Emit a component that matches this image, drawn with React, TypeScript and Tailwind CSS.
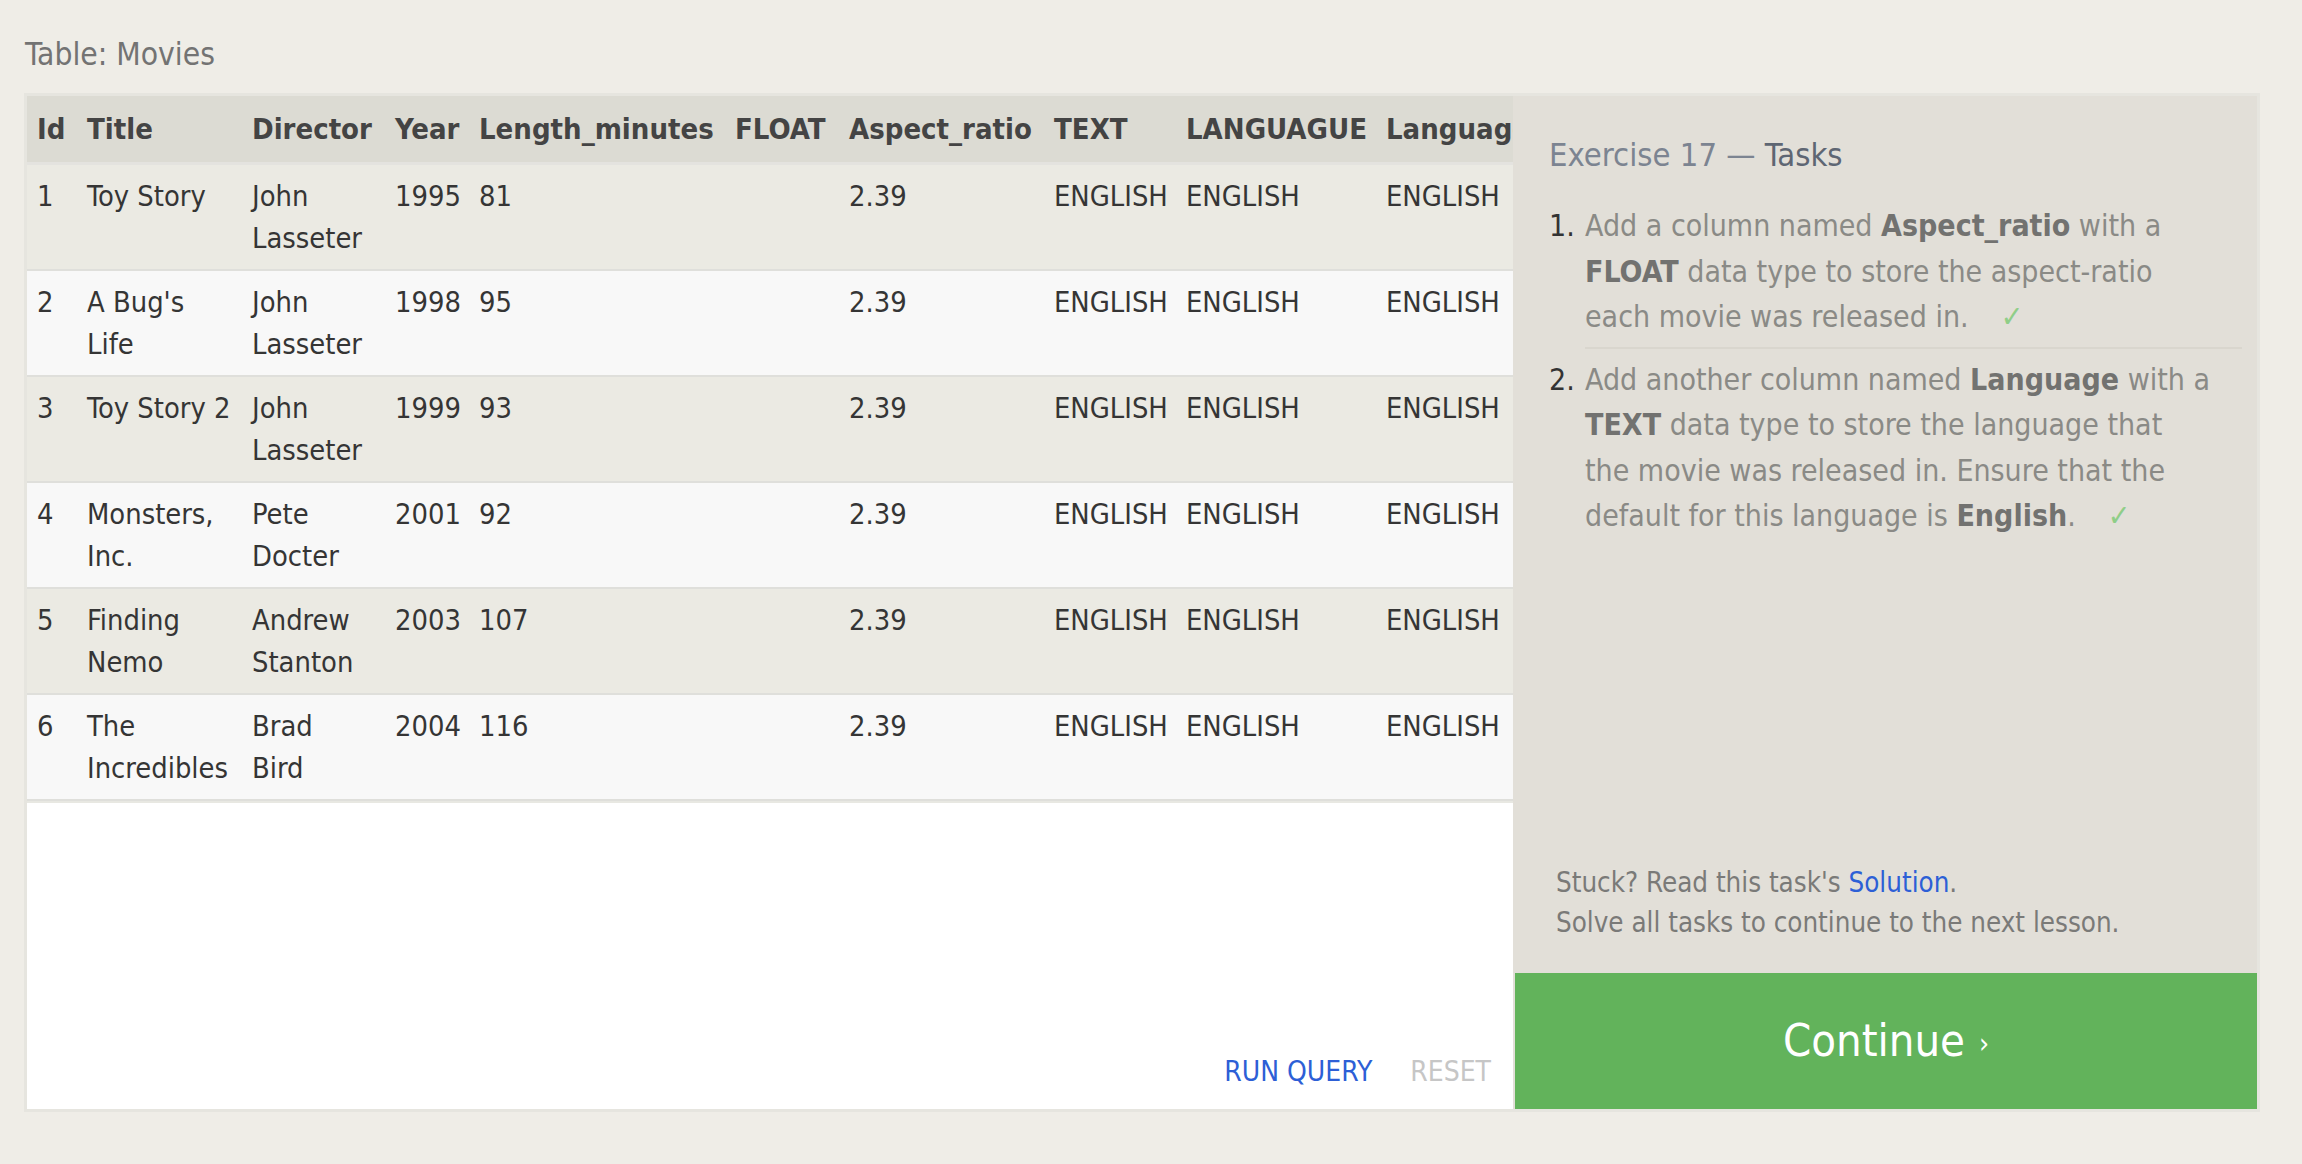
import React from "react";

const FONT = {
  fontFamily: "'DejaVu Sans Condensed', 'DejaVu Sans', sans-serif",
};

const cols = "grid grid-cols-[50px_165px_143px_84px_256px_114px_205px_132px_200px_200px] w-max";

const headers = [
  "Id",
  "Title",
  "Director",
  "Year",
  "Length_minutes",
  "FLOAT",
  "Aspect_ratio",
  "TEXT",
  "LANGUAGUE",
  "Language",
];

const rows: string[][][] = [
  [["1"], ["Toy Story"], ["John", "Lasseter"], ["1995"], ["81"], [""], ["2.39"], ["ENGLISH"], ["ENGLISH"], ["ENGLISH"]],
  [["2"], ["A Bug's", "Life"], ["John", "Lasseter"], ["1998"], ["95"], [""], ["2.39"], ["ENGLISH"], ["ENGLISH"], ["ENGLISH"]],
  [["3"], ["Toy Story 2"], ["John", "Lasseter"], ["1999"], ["93"], [""], ["2.39"], ["ENGLISH"], ["ENGLISH"], ["ENGLISH"]],
  [["4"], ["Monsters,", "Inc."], ["Pete", "Docter"], ["2001"], ["92"], [""], ["2.39"], ["ENGLISH"], ["ENGLISH"], ["ENGLISH"]],
  [["5"], ["Finding", "Nemo"], ["Andrew", "Stanton"], ["2003"], ["107"], [""], ["2.39"], ["ENGLISH"], ["ENGLISH"], ["ENGLISH"]],
  [["6"], ["The", "Incredibles"], ["Brad", "Bird"], ["2004"], ["116"], [""], ["2.39"], ["ENGLISH"], ["ENGLISH"], ["ENGLISH"]],
];

function B({ children }: { children: React.ReactNode }) {
  return <b className="text-[#727270]">{children}</b>;
}

function Check() {
  return <span className="ml-[32px] text-[#8fce88]">✓</span>;
}

export default function App() {
  return (
    <div
      className="min-h-[1164px] w-full bg-[#efede7] font-stretch-semi-condensed"
      style={FONT}
    >
      <div className="pl-[24px] pr-[42px] pt-[34px]">
        <div className="text-[31.5px] leading-[40px] text-[#737373] pl-px">Table: Movies</div>

        <div className="mt-[19px] flex h-[1019px] border-[3px] border-[#e6e5df]">
          {/* Left: table + editor */}
          <div className="flex w-[1486px] flex-col overflow-hidden">
            <div className="overflow-hidden">
              <div className={`${cols} bg-[#dcdbd3] border-b-[3px] border-[#e4e3df] py-[12px] text-[29px] font-bold leading-[42px] text-[#444444]`}>
                {headers.map((h) => (
                  <div key={h} className="pl-[10px] whitespace-nowrap">
                    {h}
                  </div>
                ))}
              </div>
              {rows.map((r, i) => (
                <div
                  key={i}
                  className={`${cols} border-b-2 border-[#dfdfdb] py-[10px] text-[28.8px] leading-[42px] text-[#353535] ${
                    i % 2 === 0 ? "bg-[#ebeae3]" : "bg-[#f8f8f8]"
                  }`}
                >
                  {r.map((cell, j) => (
                    <div key={j} className="pl-[10px]">
                      {cell.map((line, k) => (
                        <div key={k} className="whitespace-nowrap">
                          {line || "\u00a0"}
                        </div>
                      ))}
                    </div>
                  ))}
                </div>
              ))}
            </div>
            <div className="h-[2px] bg-[#e8e8e2]" />
            <div className="flex flex-1 items-end justify-end gap-[38px] bg-white pb-[16px] pr-[22px] text-[28px] leading-[42px]">
              <span className="text-[#2d5fd6]">RUN QUERY</span>
              <span className="text-[#c6c6c6]">RESET</span>
            </div>
          </div>

          {/* Right: tasks panel */}
          <div className="flex flex-1 flex-col bg-[#e2dfd8]">
            <div className="flex-1 pl-[36px] pr-[15px] pt-[38px]">
              <div className="text-[32.5px] leading-[42px]">
                <span className="text-[#7c8491]">Exercise 17 — </span>
                <span className="text-[#5e6673]">Tasks</span>
              </div>
              <ol className="mt-[27px] text-[30px] leading-[45.5px] text-[#8a8a86] whitespace-nowrap">
                <li className="grid grid-cols-[36px_1fr] pb-[8px]">
                  <span className="text-[#333333]">1.</span>
                  <span className="border-b-2 border-[#d9d6ce] pb-[7px]">
                    Add a column named <B>Aspect_ratio</B> with a
                    <br />
                    <B>FLOAT</B> data type to store the aspect-ratio
                    <br />
                    each movie was released in.
                    <Check />
                  </span>
                </li>
                <li className="grid grid-cols-[36px_1fr]">
                  <span className="text-[#333333]">2.</span>
                  <span>
                    Add another column named <B>Language</B> with a
                    <br />
                    <B>TEXT</B> data type to store the language that
                    <br />
                    the movie was released in. Ensure that the
                    <br />
                    default for this language is <B>English</B>.
                    <Check />
                  </span>
                </li>
              </ol>
            </div>
            <div className="pl-[43px] pb-[31px] text-[27.5px] leading-[40px] text-[#7a7a78]">
              <div>
                Stuck? Read this task's <span className="text-[#2d5fd6]">Solution</span>.
              </div>
              <div>Solve all tasks to continue to the next lesson.</div>
            </div>
            <div className="ml-[2px] flex h-[136px] items-center justify-center bg-[#62b35b] text-white">
              <span className="text-[45px] leading-[50px]">Continue</span>
              <span className="ml-[14px] mt-[6px] text-[28px] leading-[50px]">›</span>
            </div>
          </div>
        </div>
      </div>
    </div>
  );
}
